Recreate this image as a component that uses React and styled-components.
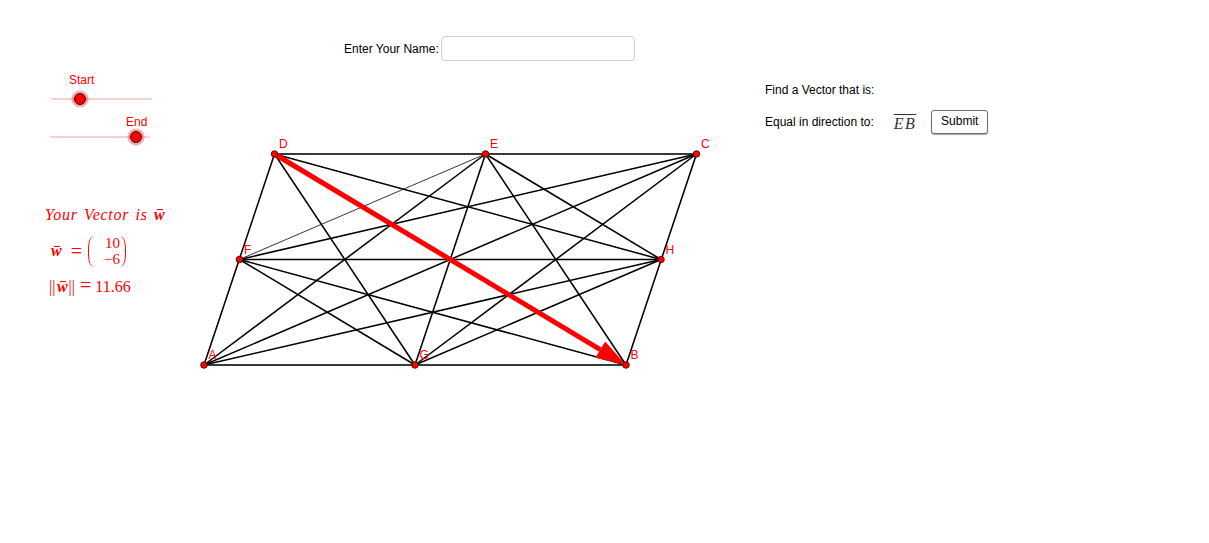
import styled, { createGlobalStyle } from "styled-components";

const GlobalStyle = createGlobalStyle`
  html, body {
    margin: 0;
    padding: 0;
    background: #ffffff;
  }
  body {
    font-family: "Liberation Sans", Arial, sans-serif;
  }
`;

// grid of the parallelogram (screen coords)
const P = {
  A: [204, 365],
  G: [415, 365],
  B: [626, 365],
  F: [239.5, 259.5],
  H: [661, 259.5],
  D: [274.5, 154],
  E: [485.5, 154],
  C: [696.5, 154],
};

const segments = [
  ["A", "D"],
  ["B", "C"],
  ["F", "H"],
  ["D", "G"],
  ["D", "H"],
  ["E", "A"],
  ["E", "G"],
  ["E", "H"],
  ["E", "B"],
  ["C", "F"],
  ["C", "A"],
  ["C", "G"],
  ["F", "G"],
  ["F", "B"],
  ["H", "A"],
  ["H", "G"],
];

function arrowHead(from, to, len, half) {
  const dx = to[0] - from[0];
  const dy = to[1] - from[1];
  const d = Math.hypot(dx, dy);
  const ux = dx / d;
  const uy = dy / d;
  const bx = to[0] - ux * len;
  const by = to[1] - uy * len;
  return {
    base: [bx, by],
    points: `${to[0]},${to[1]} ${bx - uy * half},${by + ux * half} ${bx + uy * half},${by - ux * half}`,
  };
}

export default function App() {
  const head = arrowHead(P.D, P.B, 30, 9.5);

  return (
    <Canvas>
      <GlobalStyle />
      <Drawing width="1209" height="543" viewBox="0 0 1209 543">
        {/* sliders */}
        <SliderTrack x1="51" y1="99" x2="152" y2="99" />
        <Halo cx="80" cy="99" r="8.5" />
        <Knob cx="80" cy="99" r="5.5" />
        <SliderLabel x="69" y="84">Start</SliderLabel>

        <SliderTrack x1="50" y1="137" x2="150" y2="137" />
        <Halo cx="136" cy="137" r="8.5" />
        <Knob cx="136" cy="137" r="5.5" />
        <SliderLabel x="126" y="126">End</SliderLabel>

        {/* parallelogram */}
        <Edge x1={P.D[0]} y1={P.D[1]} x2={P.C[0]} y2={P.C[1]} />
        <Edge x1={P.A[0]} y1={P.A[1]} x2={P.B[0]} y2={P.B[1]} />
        {segments.map(([a, b]) => (
          <Seg key={a + b} x1={P[a][0]} y1={P[a][1]} x2={P[b][0]} y2={P[b][1]} />
        ))}
        <ThinSeg x1={P.E[0]} y1={P.E[1]} x2={P.F[0]} y2={P.F[1]} />

        {/* vector */}
        <VectorLine x1={P.D[0]} y1={P.D[1]} x2={head.base[0]} y2={head.base[1]} />
        <VectorHead points={head.points} />

        {Object.entries(P).map(([name, [x, y]]) => (
          <g key={name}>
            <Point cx={x} cy={y} r="3.3" />
            <PointLabel x={x + 4.5} y={y - 6}>
              {name}
            </PointLabel>
          </g>
        ))}
      </Drawing>

      <NameField>
        <FieldLabel>Enter Your Name:</FieldLabel>
        <NameInput type="text" />
      </NameField>

      <MathBlock>
        <MathLine>
          Your Vector is <Vec>w</Vec>
        </MathLine>
        <MatrixLine>
          <Vec>w</Vec>
          <Eq>=</Eq>
          <Paren />
          <Column>
            <span>10</span>
            <span>−6</span>
          </Column>
          <Paren right />
        </MatrixLine>
        <NormLine>
          <span>||</span>
          <NormVec>w</NormVec>
          <span>||</span>
          <NormEq>=</NormEq>
          <span>11.66</span>
        </NormLine>
      </MathBlock>

      <TaskPanel>
        <TaskText>Find a Vector that is:</TaskText>
        <TaskRow>
          <TaskText>Equal in direction to:</TaskText>
          <Segment>EB</Segment>
          <SubmitButton>Submit</SubmitButton>
        </TaskRow>
      </TaskPanel>
    </Canvas>
  );
}

const Canvas = styled.div`
  position: relative;
  width: 1209px;
  height: 543px;
  overflow: hidden;
  background: #ffffff;
`;

const Drawing = styled.svg`
  position: absolute;
  left: 0;
  top: 0;
  display: block;
`;

const SliderTrack = styled.line`
  stroke: #f4a0a0;
  stroke-width: 1.2;
`;

const Halo = styled.circle`
  fill: rgba(255, 0, 0, 0.35);
`;

const Knob = styled.circle`
  fill: #ff0000;
  stroke: #1a1a1a;
  stroke-width: 1;
`;

const SliderLabel = styled.text`
  font-family: "Liberation Sans", Arial, sans-serif;
  font-size: 12px;
  fill: #ff0000;
`;

const Edge = styled.line`
  stroke: #3a3a3a;
  stroke-width: 2.2;
`;

const Seg = styled.line`
  stroke: #000000;
  stroke-width: 1.55;
`;

const ThinSeg = styled.line`
  stroke: #000000;
  stroke-width: 0.8;
`;

const VectorLine = styled.line`
  stroke: #ff0000;
  stroke-width: 5;
`;

const VectorHead = styled.polygon`
  fill: #ff0000;
`;

const Point = styled.circle`
  fill: #ff0000;
  stroke: #3a0000;
  stroke-width: 0.8;
`;

const PointLabel = styled.text`
  font-family: "Liberation Sans", Arial, sans-serif;
  font-size: 12px;
  fill: #ff0000;
`;

const NameField = styled.div`
  position: absolute;
  left: 344px;
  top: 36px;
  display: flex;
  align-items: center;
  gap: 2px;
`;

const FieldLabel = styled.span`
  font-size: 12px;
  color: #000;
`;

const NameInput = styled.input`
  box-sizing: border-box;
  width: 194px;
  height: 25px;
  margin: 0;
  border: 1px solid #cfcfcf;
  border-radius: 4px;
  background: #fff;
  outline: none;
`;

const MathBlock = styled.div`
  position: absolute;
  left: 45px;
  top: 205px;
  display: flex;
  flex-direction: column;
  color: #ff0000;
  font-family: "Liberation Serif", "Times New Roman", serif;
`;

const MathLine = styled.div`
  font-size: 16px;
  line-height: 20px;
  font-style: italic;
  letter-spacing: 0.75px;
  word-spacing: 1.5px;
`;

const Vec = styled.span`
  position: relative;
  display: inline-block;
  font-weight: bold;
  font-style: italic;
  font-size: 16px;
  letter-spacing: 0;

  &::before {
    content: "";
    position: absolute;
    left: 3px;
    right: 2px;
    top: 4px;
    border-top: 1.2px solid currentColor;
  }
`;

const NormVec = styled(Vec)`
  margin: 0 1px 0 1.5px;
`;

const MatrixLine = styled.div`
  display: flex;
  align-items: center;
  margin-top: 10px;
  padding-left: 6px;
  font-size: 16px;
`;

const Eq = styled.span`
  font-style: normal;
  font-weight: normal;
  font-size: 20px;
  line-height: 20px;
  margin: 0 6px 0 9px;
`;

const Paren = styled.span`
  width: 6px;
  height: 31px;
  box-sizing: border-box;
  border: 0 solid #ff0000;
  ${(p) =>
    p.right
      ? "border-right-width: 1.5px; border-radius: 0 8px 8px 0 / 0 16px 16px 0;"
      : "border-left-width: 1.5px; border-radius: 8px 0 0 8px / 16px 0 0 16px;"}
`;

const Column = styled.span`
  display: flex;
  flex-direction: column;
  align-items: flex-end;
  padding: 0 0 0 10px;
  font-size: 15px;
  line-height: 16px;
`;

const NormLine = styled.div`
  display: flex;
  align-items: baseline;
  margin-top: 8px;
  padding-left: 4px;
  font-size: 16px;
  line-height: 20px;
`;

const NormEq = styled.span`
  font-size: 20px;
  margin: 0 4px 0 5px;
`;

const TaskPanel = styled.div`
  position: absolute;
  left: 764px;
  top: 83px;
  display: flex;
  flex-direction: column;
  gap: 13px;
`;

const TaskText = styled.span`
  font-size: 12px;
  line-height: 14px;
  color: #000;
  padding-left: 1px;
`;

const TaskRow = styled.div`
  display: flex;
  align-items: center;
`;

const Segment = styled.span`
  margin-left: 20px;
  margin-top: 4px;
  font-family: "Liberation Serif", "Times New Roman", serif;
  font-style: italic;
  font-size: 16px;
  letter-spacing: 1.5px;
  color: #333;
  text-decoration: overline;
  text-decoration-thickness: 1px;
`;

const SubmitButton = styled.button`
  box-sizing: border-box;
  margin-left: 15px;
  width: 57px;
  height: 24px;
  padding: 0 0 2px;
  border: 1px solid #6e6e6e;
  border-radius: 3px;
  background: #ffffff;
  box-shadow: 0 1px 1px rgba(0, 0, 0, 0.35);
  font-family: "Liberation Sans", Arial, sans-serif;
  font-size: 12px;
  color: #000;
`;
